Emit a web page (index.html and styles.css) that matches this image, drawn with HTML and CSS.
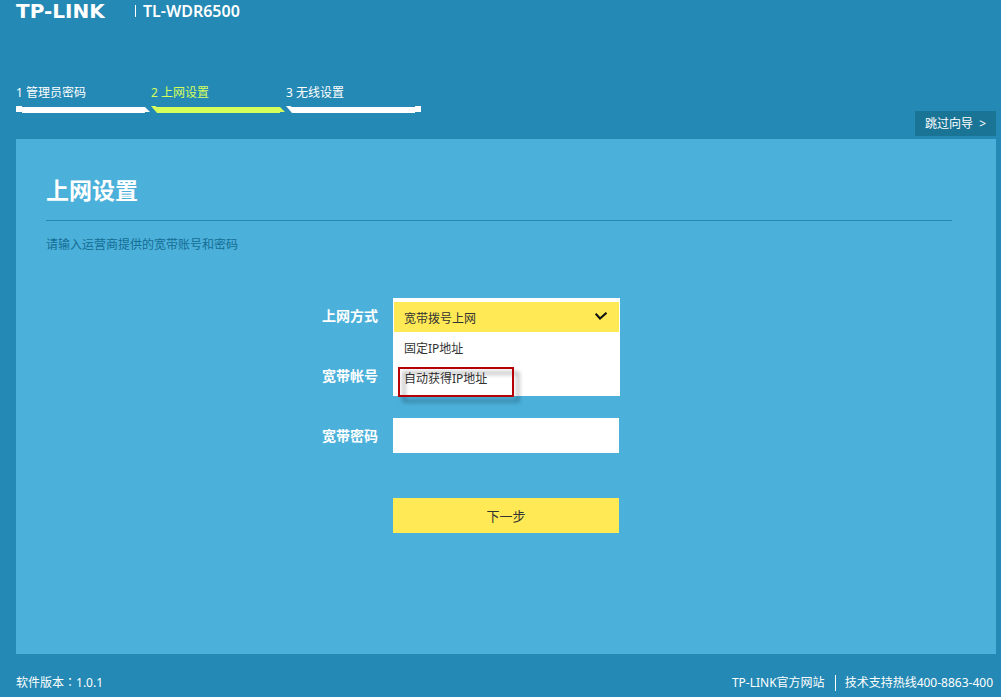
FILE: index.html
```html
<!DOCTYPE html>
<html lang="zh-CN">
<head>
<meta charset="utf-8">
<meta name="viewport" content="width=device-width, initial-scale=1">
<title>TL-WDR6500</title>
<link rel="stylesheet" href="styles.css">
</head>
<body class="page">
<header class="header">
  <span class="brand">TP-LINK</span>
  <span class="model">TL-WDR6500</span>
</header>
<nav class="wizard">
  <ol class="steps">
    <li class="step">1 管理员密码
      <svg class="step-bar" viewBox="0 0 135 8" aria-hidden="true"><path d="M0 0H6V1H129L134 6H129V7H6V6H0Z"/></svg>
    </li>
    <li class="step step-current" aria-current="step">2 上网设置
      <svg class="step-bar" viewBox="0 0 135 8" aria-hidden="true"><path d="M0 0H4L6 1H129L134 6H129V7H6Z"/></svg>
    </li>
    <li class="step">3 无线设置
      <svg class="step-bar" viewBox="0 0 135 8" aria-hidden="true"><path d="M0 0H4L6 1H129V0H135V6H129V7H6Z"/></svg>
    </li>
  </ol>
  <button class="skip" type="button">跳过向导&nbsp; &gt;</button>
</nav>
<main class="panel">
  <h1 class="title">上网设置</h1>
  <p class="hint">请输入运营商提供的宽带账号和密码</p>
  <form class="form">
    <label class="label" for="mode">上网方式</label>
    <div class="field dropdown">
      <select class="options" id="mode" size="3">
        <option class="option" selected>宽带拨号上网</option>
        <option class="option">固定IP地址</option>
        <option class="option">自动获得IP地址</option>
      </select>
      <svg class="check" viewBox="0 0 12 8" aria-hidden="true"><path d="M.7 1.7 5 6.5 11.5.8"/></svg>
      <span class="highlight"></span>
    </div>
    <label class="label" for="account">宽带帐号</label>
    <input class="field" id="account" type="text">
    <label class="label" for="password">宽带密码</label>
    <input class="field" id="password" type="password">
    <button class="next" type="button">下一步</button>
  </form>
</main>
<footer class="footer">
  <span>软件版本<span class="colon" lang="zh-TW">：</span>1.0.1</span>
  <div class="support">
    <a class="site" href="#">TP-LINK官方网站</a>
    <span class="hotline">技术支持热线400-8863-400</span>
  </div>
</footer>
</body>
</html>
```
FILE: styles.css
```css
* {
  box-sizing: border-box;
}

.page {
  display: flex;
  flex-direction: column;
  min-height: 100vh;
  margin: 0;
  padding: 0 5px 0 16px;
  background: #2489b4;
  color: #fff;
  font: 12px/16px "Noto Sans", "Noto Sans CJK SC", sans-serif;
}

.header {
  display: flex;
  align-items: center;
  height: 22px;
}

.brand {
  width: 112px;
  font: bold 20px/20px "DejaVu Sans", sans-serif;
}

.model {
  margin-left: 7px;
  padding-left: 7px;
  border-left: 1px solid #fff;
  font-size: 16px;
  line-height: 12px;
  font-weight: 600;
}

.wizard {
  display: flex;
  justify-content: space-between;
  align-items: flex-end;
  height: 114px;
  margin-bottom: 3px;
}

.steps {
  display: flex;
  align-self: flex-start;
  margin: 63px 0 0;
  padding: 0;
  list-style: none;
}

.step {
  width: 135px;
}

.step-current {
  color: #d6ff5c;
}

.step-bar {
  display: block;
  width: 135px;
  height: 8px;
  margin-top: 5px;
  fill: currentColor;
}

.skip {
  height: 25px;
  padding: 0 10px;
  border: 0;
  background: #1a7496;
  color: #fff;
  font: inherit;
}

.panel {
  flex: 1;
  padding: 35px 30px;
  background: #4bb0da;
}

.title {
  margin: 0 14px 0 0;
  padding-bottom: 14px;
  border-bottom: 1px solid #2489b4;
  font-size: 23px;
  line-height: 32px;
}

.hint {
  margin: 16px 0 45px;
  color: #156d94;
}

.form {
  display: grid;
  grid-template-columns: 1fr 226px 1fr;
  row-gap: 25px;
}

.label {
  grid-column: 1;
  padding-right: 15px;
  text-align: right;
  font-size: 14px;
  font-weight: bold;
  line-height: 35px;
}

.field {
  grid-column: 2;
  width: 100%;
  height: 35px;
  padding: 0 10px;
  border: 0;
  background: #fff;
  font: inherit;
}

.dropdown {
  position: relative;
  padding: 0;
}

.options {
  position: absolute;
  top: 0;
  left: 0;
  z-index: 1;
  width: 227px;
  height: 98px;
  padding: 4px 0 0;
  border: solid #fff;
  border-width: 0 1px;
  border-radius: 0;
  outline: 0;
  background: #fff;
  color: #333;
  font: inherit;
  overflow: hidden;
  appearance: none;
}

.option {
  height: 30px;
  min-height: 30px;
  padding: 7px 10px 0;
  color: #333;
  font-size: 12px;
}

.option:checked {
  background: linear-gradient(#ffe955, #ffe955);
  color: #333;
}

.check {
  position: absolute;
  top: 14px;
  right: 12px;
  z-index: 2;
  width: 12px;
  height: 8px;
  fill: none;
  stroke: #111;
  stroke-width: 2;
}

.highlight {
  position: absolute;
  top: 69px;
  left: 5px;
  z-index: 3;
  width: 116px;
  height: 30px;
  border: 2px solid #b70005;
  filter: drop-shadow(5px 5px 2px rgba(0, 0, 0, 0.4));
  pointer-events: none;
}

.next {
  grid-column: 2;
  height: 35px;
  margin-top: 20px;
  border: 0;
  background: #ffe955;
  color: #333;
  font: inherit;
  font-size: 13px;
}

.footer {
  display: flex;
  justify-content: space-between;
  align-items: center;
  height: 43px;
  padding-top: 14px;
}

.colon {
  font-family: "Noto Sans CJK TC", sans-serif;
  line-height: 1;
}

.support {
  display: flex;
}

.site {
  padding-right: 10px;
  border-right: 1px solid #fff;
  color: inherit;
  text-decoration: none;
}

.hotline {
  padding: 0 3px 0 9px;
}
```
